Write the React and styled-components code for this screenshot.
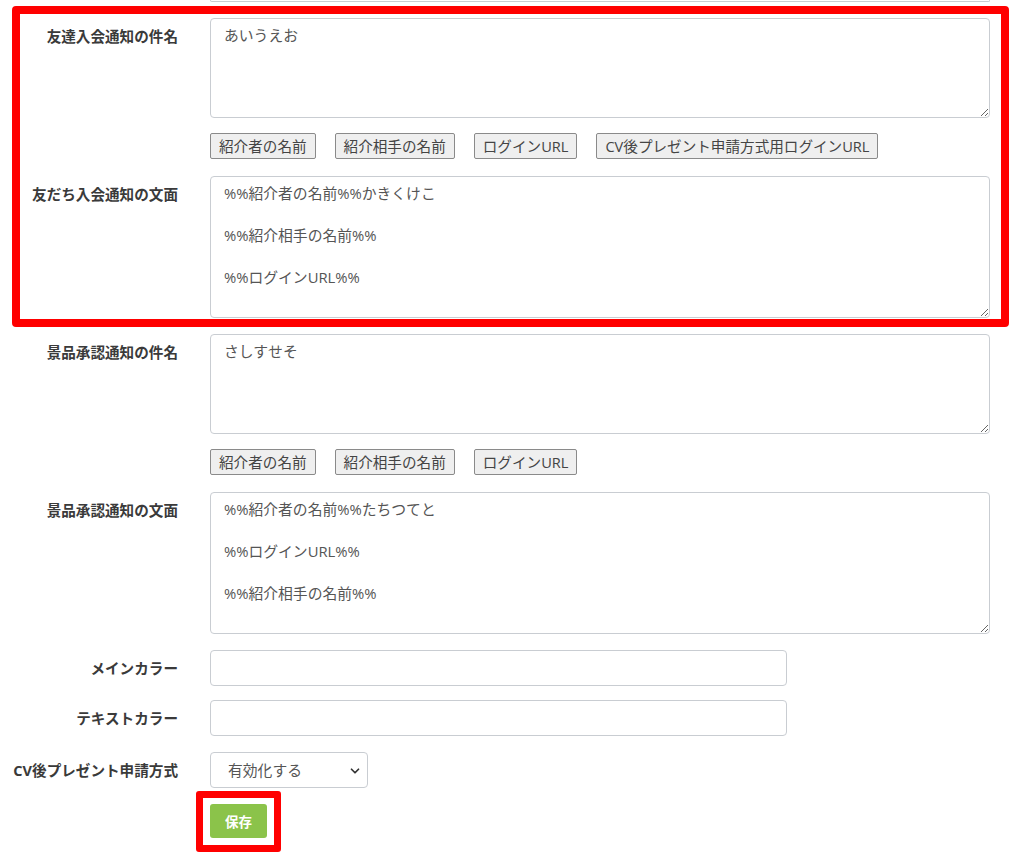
import React from 'react';
import styled, { createGlobalStyle } from 'styled-components';
import { ChevronDown } from 'lucide-react';

const GlobalStyle = createGlobalStyle`
  body {
    margin: 0;
    background: #fff;
    font-family: "Open Sans", "Noto Sans CJK JP", sans-serif;
    color: #333;
  }
`;

const Page = styled.div`
  width: 1024px;
  padding-bottom: 10px;
`;

const CutField = styled.div`
  margin-left: 210px;
  width: 780px;
  height: 2px;
  box-sizing: border-box;
  border: 1px solid #c9cdd2;
  border-top: none;
  border-radius: 0 0 4px 4px;
`;

const Highlight = styled.div`
  margin: 4px 0 7px 12px;
  width: 997px;
  box-sizing: border-box;
  border: 8px solid #ff0000;
  border-radius: 4px;
  padding: 4px 0 1px 0;
`;

const Row = styled.div`
  display: grid;
  grid-template-columns: ${(p) => (p.$inset ? '158px' : '178px')} 1fr;
  column-gap: 32px;
  margin-bottom: ${(p) => (p.$gap !== undefined ? p.$gap : 16)}px;
  &:last-child { margin-bottom: 0; }
`;

const Label = styled.label`
  text-align: right;
  font-size: 14.6px;
  font-weight: 700;
  line-height: 18px;
  padding-top: 9px;
  color: #3a3a3a;
  white-space: nowrap;
`;

const Area = styled.textarea`
  display: block;
  width: 780px;
  height: ${(p) => p.$h}px;
  box-sizing: border-box;
  border: 1px solid #c9cdd2;
  border-radius: 4px;
  padding: 6px 13px;
  font-family: "Open Sans", "Noto Sans CJK JP", sans-serif;
  font-size: 14.8px;
  line-height: 21px;
  color: #555;
  outline: none;
  margin: 0;
`;

const Input = styled.input`
  display: block;
  width: 577px;
  height: 36px;
  box-sizing: border-box;
  border: 1px solid #c9cdd2;
  border-radius: 4px;
  padding: 6px 13px;
  font-size: 14px;
  margin: 0;
`;

const Tags = styled.div`
  display: flex;
  gap: 19px;
`;

const Tag = styled.button`
  height: 26px;
  padding: 0 8px 1px;
  background: #efefef;
  border: 1px solid #8a8a8a;
  border-radius: 2px;
  font-family: "Open Sans", "Noto Sans CJK JP", sans-serif;
  font-size: 14.6px;
  color: #444;
`;

const SelectWrap = styled.div`
  position: relative;
  width: 158px;
  height: 36px;
`;

const Select = styled.select`
  appearance: none;
  width: 100%;
  height: 100%;
  box-sizing: border-box;
  border: 1px solid #c9cdd2;
  border-radius: 4px;
  padding: 0 30px 0 17px;
  background: #fff;
  font-family: "Open Sans", "Noto Sans CJK JP", sans-serif;
  font-size: 14.8px;
  color: #555;
`;

const Arrow = styled(ChevronDown)`
  position: absolute;
  right: 6px;
  top: 12px;
  pointer-events: none;
`;

const SaveFrame = styled.div`
  margin: 3px 0 0 196px;
  width: 85px;
  box-sizing: border-box;
  border: 7px solid #ff0000;
  border-radius: 3px;
  padding: 6px 7px 7px;
`;

const SaveButton = styled.button`
  display: block;
  width: 57px;
  height: 34px;
  border: none;
  border-radius: 3px;
  background: #8bc34a;
  color: #fff;
  font-family: "Open Sans", "Noto Sans CJK JP", sans-serif;
  font-size: 13.5px;
  font-weight: 600;
`;

const friendBody = '%%紹介者の名前%%かきくけこ\n\n%%紹介相手の名前%%\n\n%%ログインURL%%';
const prizeBody = '%%紹介者の名前%%たちつてと\n\n%%ログインURL%%\n\n%%紹介相手の名前%%';

const TagRow = ({ items, inset }) => (
  <Row $inset={inset} $gap={17}>
    <span />
    <Tags>
      {items.map((t) => <Tag key={t} type="button">{t}</Tag>)}
    </Tags>
  </Row>
);

const App = () => (
  <Page>
    <GlobalStyle />
    <CutField />
    <Highlight>
      <Row $inset $gap={15}>
        <Label>友達入会通知の件名</Label>
        <Area $h={100} defaultValue="あいうえお" />
      </Row>
      <TagRow inset items={['紹介者の名前', '紹介相手の名前', 'ログインURL', 'CV後プレゼント申請方式用ログインURL']} />
      <Row $inset>
        <Label>友だち入会通知の文面</Label>
        <Area $h={142} defaultValue={friendBody} />
      </Row>
    </Highlight>
    <Row $gap={15}>
      <Label>景品承認通知の件名</Label>
      <Area $h={100} defaultValue="さしすせそ" />
    </Row>
    <TagRow items={['紹介者の名前', '紹介相手の名前', 'ログインURL']} />
    <Row $gap={16}>
      <Label>景品承認通知の文面</Label>
      <Area $h={142} defaultValue={prizeBody} />
    </Row>
    <Row $gap={14}>
      <Label>メインカラー</Label>
      <Input />
    </Row>
    <Row $gap={16}>
      <Label>テキストカラー</Label>
      <Input />
    </Row>
    <Row $gap={0}>
      <Label>CV後プレゼント申請方式</Label>
      <SelectWrap>
        <Select defaultValue="on">
          <option value="on">有効化する</option>
          <option value="off">無効化する</option>
        </Select>
        <Arrow size={14} strokeWidth={3} color="#333" />
      </SelectWrap>
    </Row>
    <SaveFrame>
      <SaveButton type="button">保存</SaveButton>
    </SaveFrame>
  </Page>
);

export default App;
